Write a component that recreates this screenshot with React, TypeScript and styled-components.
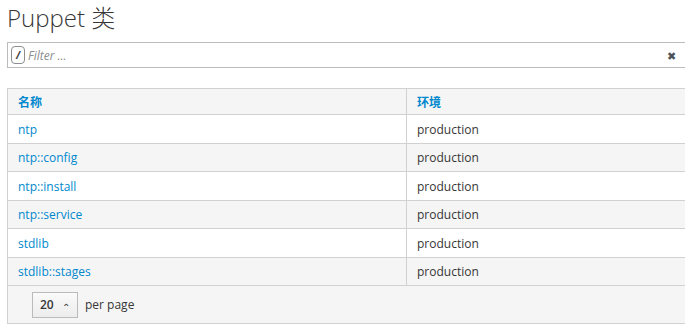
import { FC } from "react";
import styled, { createGlobalStyle } from "styled-components";

type PuppetClass = {
  name: string;
  environment: string;
};

const classes: PuppetClass[] = [
  { name: "ntp", environment: "production" },
  { name: "ntp::config", environment: "production" },
  { name: "ntp::install", environment: "production" },
  { name: "ntp::service", environment: "production" },
  { name: "stdlib", environment: "production" },
  { name: "stdlib::stages", environment: "production" },
];

const GlobalStyle = createGlobalStyle`
  html, body {
    margin: 0;
    padding: 0;
    background: #fff;
    overflow: hidden;
  }
  body {
    font-family: "Open Sans", "Noto Sans CJK SC", sans-serif;
    font-size: 12px;
    color: #363636;
  }
`;

const App: FC = () => (
  <>
    <GlobalStyle />
    <Page>
      <Title>Puppet 类</Title>
      <SearchBar>
        <KeyHint>/</KeyHint>
        <SearchInput placeholder="Filter ..." />
        <ClearButton>✖</ClearButton>
      </SearchBar>
      <Table>
        <thead>
          <tr>
            <HeadCell $width={399}>名称</HeadCell>
            <HeadCell>环境</HeadCell>
          </tr>
        </thead>
        <tbody>
          {classes.map((item, i) => (
            <Row key={item.name} $striped={i % 2 === 1}>
              <Cell>
                <Link href="#">{item.name}</Link>
              </Cell>
              <Cell>{item.environment}</Cell>
            </Row>
          ))}
        </tbody>
      </Table>
      <Footer>
        <PageSize>
          20 <Caret>⌃</Caret>
        </PageSize>
        <PerPage>per page</PerPage>
      </Footer>
    </Page>
  </>
);

// the list runs off the right edge of the view, as in the product
const Page = styled.div`
  width: 685px;
  padding-left: 7px;
  box-sizing: border-box;
  overflow: hidden;
`;

const Title = styled.h1`
  margin: 0;
  padding-top: 1px;
  height: 41px;
  font-size: 24px;
  font-weight: 300;
  color: #363636;
  line-height: 34px;
`;

const SearchBar = styled.div`
  display: flex;
  align-items: center;
  height: 24px;
  border: 1px solid #bbb;
  border-right: none;
`;

const KeyHint = styled.span`
  display: flex;
  align-items: center;
  justify-content: center;
  margin-left: 3px;
  width: 12px;
  height: 16px;
  border: 1px solid #8b8d8f;
  border-radius: 4px;
  font-size: 10px;
  font-weight: 700;
  font-style: italic;
  color: #363636;
`;

const SearchInput = styled.input`
  flex: 1;
  min-width: 0;
  border: none;
  outline: none;
  margin-left: 3px;
  padding: 0;
  font-family: "Open Sans", sans-serif;
  font-size: 12px;
  font-style: italic;
  background: transparent;
  &::placeholder {
    color: #8b8d8f;
  }
`;

const ClearButton = styled.span`
  margin-right: 9px;
  font-size: 11px;
  color: #4d5258;
`;

const Table = styled.table`
  margin-top: 20px;
  border-collapse: collapse;
  width: 700px;
  border: 1px solid #d1d1d1;
  border-bottom: none;
  table-layout: fixed;
`;

const HeadCell = styled.th<{ $width?: number }>`
  width: ${(p) => (p.$width ? `${p.$width}px` : "auto")};
  height: 26px;
  padding: 1px 10px 0;
  text-align: left;
  font-weight: 700;
  color: #0088ce;
  background: #f5f5f5;
  border: 1px solid #d1d1d1;
  border-top: none;
  box-sizing: border-box;
`;

const Row = styled.tr<{ $striped: boolean }>`
  background: ${(p) => (p.$striped ? "#f5f5f5" : "#fff")};
`;

const Cell = styled.td`
  height: 28.5px;
  padding: 1px 10px 0;
  border: 1px solid #d1d1d1;
  border-top: none;
  box-sizing: border-box;
`;

const Link = styled.a`
  color: #0088ce;
  text-decoration: none;
`;

const Footer = styled.div`
  display: flex;
  align-items: center;
  gap: 7px;
  height: 37px;
  padding-left: 24px;
  background: #f5f5f5;
  border: 1px solid #d1d1d1;
  border-top: none;
  border-right: none;
`;

const PageSize = styled.span`
  display: flex;
  align-items: center;
  justify-content: space-between;
  width: 46px;
  height: 26px;
  padding: 0 7px;
  box-sizing: border-box;
  border: 1px solid #bbb;
  background: linear-gradient(#fafafa, #ededed);
  font-weight: 600;
  color: #363636;
`;

const Caret = styled.span`
  font-size: 10px;
  font-weight: 400;
  margin-top: 4px;
`;

const PerPage = styled.span`
  color: #363636;
`;

export default App;
